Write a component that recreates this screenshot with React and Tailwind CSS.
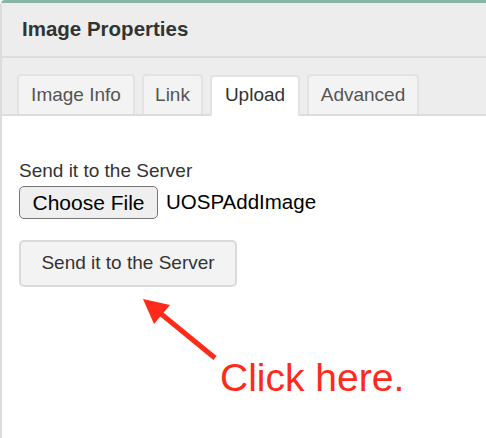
import React from "react";

const tabs = [
  { label: "Image Info", w: "w-[118px]" },
  { label: "Link", w: "w-[61px]" },
  { label: "Upload", w: "w-[90px]", active: true },
  { label: "Advanced", w: "w-[112px]" },
];

export default function App() {
  return (
    <div className="relative w-[486px] h-[438px] overflow-hidden bg-white font-['Liberation_Sans',Arial,sans-serif]">
      <div className="h-full border-l-2 border-t-[3px] border-l-[#dcdcdc] border-t-[#88b6a4] rounded-tl-[5px]">
        {/* dialog title */}
        <div className="h-[55px] flex items-center pl-[20px] bg-[#ededed] border-b-2 border-[#dcdcdc]">
          <span className="text-[20.5px] font-bold text-[#333]">Image Properties</span>
        </div>

        {/* tab strip */}
        <div className="h-[58px] flex items-end gap-[7px] pl-[15px] bg-[#ededed] border-b-2 border-[#dcdcdc]">
          {tabs.map((tab, index) => (
            <div
              key={index}
              className={`${tab.w} flex items-center justify-center rounded-t-[4px] border-2 border-b-0 text-[19px] ${
                tab.active
                  ? "h-[41px] -mb-[2px] pb-[2px] bg-white border-[#e3e3e3] text-[#333]"
                  : "h-[40px] bg-[#f3f3f3] border-[#e3e3e3] text-[#555]"
              }`}
            >
              {tab.label}
            </div>
          ))}
        </div>

        {/* upload panel */}
        <div className="pt-[44px] pl-[17px]">
          <div className="text-[19px] leading-[22px] text-[#333]">Send it to the Server</div>
          <div className="flex items-center mt-[4px]">
            <button
              type="button"
              className="h-[33px] w-[139px] rounded-[5px] border border-[#767676] bg-[#efefef] text-[21px] text-black"
            >
              Choose File
            </button>
            <span className="ml-[8px] text-[20.5px] text-black">UOSPAddImage</span>
          </div>
          <button
            type="button"
            className="mt-[21px] h-[47px] w-[218px] rounded-[5px] border-2 border-[#dadada] bg-[#f3f3f3] text-[19px] text-[#333]"
          >
            Send it to the Server
          </button>
        </div>
      </div>

      {/* annotation */}
      <svg className="absolute left-0 top-0" width="486" height="438" viewBox="0 0 486 438">
        <line x1="160" y1="313" x2="215" y2="358" stroke="#ff2a1a" strokeWidth="5" />
        <polygon points="143,299 170,305 154,324" fill="#ff2a1a" />
      </svg>
      <div className="absolute left-[220px] top-[355px] text-[39px] leading-[45px] text-[#ff2a1a]">
        Click here.
      </div>
    </div>
  );
}
